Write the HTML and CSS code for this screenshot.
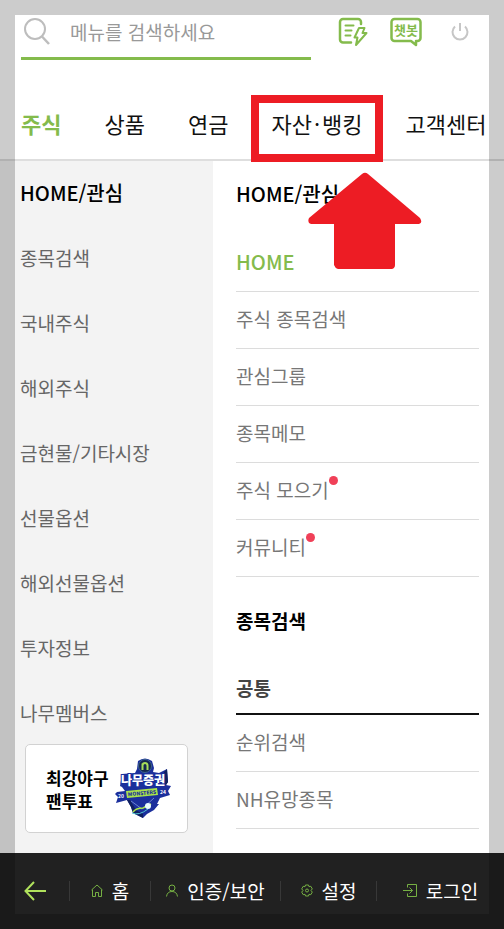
FILE: index.html
```html
<!DOCTYPE html>
<html lang="ko">
<head>
    <meta charset="UTF-8">
    <meta name="viewport" content="width=device-width, initial-scale=1.0">
    <title>전체 메뉴</title>
    <link rel="stylesheet" href="styles.css">
</head>
<body>

<div class="page">
    <header class="header">
        <div class="top">
            <label class="search">
                <svg width="26" height="28" viewBox="0 0 26 28" fill="none" stroke="#bdbdbd" stroke-width="2" role="img" aria-label="검색">
                    <circle cx="11" cy="11" r="10"/>
                    <path d="M18 18.500l7 7.500" stroke-width="2.500"/>
                </svg>
                <input type="search" placeholder="메뉴를 검색하세요">
            </label>
            <div class="tools">
                <button type="button" aria-label="빠른주문">
                    <svg width="30" height="30" viewBox="0 0 30 30" fill="none" stroke="#84bb4c" stroke-width="2.500" stroke-linejoin="round" stroke-linecap="round">
                        <path d="M23 7V5A3 3 0 0 0 20 2H5A3 3 0 0 0 2 5V22.500A3 3 0 0 0 5 25.500H13"/>
                        <path d="M7.500 8.500h8M7.500 13.500h6M7.500 18.500h5" stroke-width="2"/>
                        <path d="M21 11h5.500l-2 5h4L18 28l1.500-7.500h-3z" stroke-width="2"/>
                    </svg>
                </button>
                <button type="button" class="chatbot">
                    <svg width="32" height="30" viewBox="0 0 32 30" fill="none" stroke="#84bb4c" stroke-width="2.500" stroke-linejoin="round">
                        <path d="M4.500 2h23A3 3 0 0 1 30.500 5v16a3 3 0 0 1-3 3H26v4l-5-4H4.500a3 3 0 0 1-3-3V5a3 3 0 0 1 3-3z"/>
                    </svg>
                    <span>챗봇</span>
                </button>
                <button type="button" class="power" aria-label="종료">
                    <svg width="18" height="20" viewBox="0 0 18 20" fill="none" stroke="#c6c6c6" stroke-width="2">
                        <path d="M4 4.500a7.500 7.500 0 1 0 10 0M9 1v8"/>
                    </svg>
                </button>
            </div>
        </div>
        <nav class="tabs">
            <a href="#" class="active">주식</a>
            <a href="#">상품</a>
            <a href="#">연금</a>
            <a href="#" class="marked">자산<span class="dot">·</span>뱅킹
                <svg class="arrow" width="114" height="97" viewBox="0 0 114 97" fill="#ed1c24">
                    <path d="M54 2q3-2.500 6 0L112 46q3 5-1 6H87v41q0 3-3 4H30q-3-1-4-4V52H3q-4-1-2-6z"/>
                </svg>
            </a>
            <a href="#">고객센터</a>
        </nav>
    </header>

    <main class="content">
        <aside class="side">
            <nav class="categories">
                <a href="#" class="active">HOME/관심</a>
                <a href="#">종목검색</a>
                <a href="#">국내주식</a>
                <a href="#">해외주식</a>
                <a href="#">금현물/기타시장</a>
                <a href="#">선물옵션</a>
                <a href="#">해외선물옵션</a>
                <a href="#">투자정보</a>
                <a href="#">나무멤버스</a>
            </nav>
            <a href="#" class="banner">
                <span>최강야구<br>팬투표</span>
                <svg width="56" height="62" viewBox="0 0 56 62" role="img" aria-label="나무증권 몬스터즈">
                    <path fill="#1b2f9c" d="M23 3Q30-2 37 3L39 10 38 14 44 15 52 11 53 24 51 27 56 28 53 33 55 37 45 40 42 46 44 46 39 52 32 56 28 60 18 55 16 49 12 42 1 45 3 39 0 36 2 34 10 33 7 29 5 28 7 16 20 15 22 11Z"/>
                    <path fill="#10205f" d="M52 11L53 24 51 27 49 28V14ZM12 42L16 49 18 55 28 60 28 56 21 52 15 42Z"/>
                    <circle cx="30" cy="8" r="6.500" fill="#14284f" stroke="#3d6490"/>
                    <path d="M27.500 12V5.500M27.500 7.500q0-2.500 2.500-2.500t2.500 2.500v4.500" fill="none" stroke="#a6df5a" stroke-width="2"/>
                    <text x="28" y="27" class="logo-name">나무증권</text>
                    <path fill="#a9e34b" d="M11 33L42 30 43 37 12 40Z"/>
                    <text x="27" y="37" class="logo-team" transform="rotate(-5 27 35)">MONSTERS</text>
                    <text x="6" y="40" class="logo-year">20</text>
                    <text x="48" y="36" class="logo-year">24</text>
                    <path d="M16 43L27 51 39 40" fill="none" stroke="#6d83cf" stroke-width="1"/>
                    <path d="M18 54q3-4 10-4l8-4" fill="none" stroke="#a9e34b" stroke-width="1.500"/>
                    <path d="M17 55q7 3 16-4" fill="none" stroke="#54c7d6" stroke-width="1"/>
                    <circle cx="33" cy="48" r="3" fill="#e9fbff"/>
                </svg>
            </a>
        </aside>

        <section class="menu">
            <h2 class="first">HOME/관심</h2>
            <ul>
                <li><a href="#" class="active">HOME</a></li>
                <li><a href="#">주식 종목검색</a></li>
                <li><a href="#">관심그룹</a></li>
                <li><a href="#">종목메모</a></li>
                <li><a href="#" class="new">주식 모으기</a></li>
                <li><a href="#" class="new">커뮤니티</a></li>
            </ul>
            <h2>종목검색</h2>
            <h3>공통</h3>
            <ul>
                <li><a href="#">순위검색</a></li>
                <li><a href="#">NH유망종목</a></li>
            </ul>
        </section>
    </main>

    <footer class="bottom">
        <button type="button" aria-label="뒤로">
            <svg width="22" height="20" viewBox="0 0 22 20" fill="none" stroke="#b0e25c" stroke-width="2">
                <path d="M22 10H1.500M10 1L1.500 10 10 19"/>
            </svg>
        </button>
        <a href="#">
            <svg width="12" height="13" viewBox="0 0 12 13" fill="none" stroke="#76b043" stroke-linejoin="round">
                <path d="M.5 6L6 1l5.500 5M1.500 5.500v7h3v-4h3v4h3v-7"/>
            </svg>
            홈
        </a>
        <a href="#">
            <svg width="12" height="13" viewBox="0 0 12 13" fill="none" stroke="#76b043">
                <circle cx="6" cy="4" r="3"/>
                <path d="M.5 12.500C1 9 3 7.500 6 7.500s5 1.500 5.500 5"/>
            </svg>
            인증/보안
        </a>
        <a href="#">
            <svg width="12" height="13" viewBox="0 0 12 13" fill="none" stroke="#76b043" stroke-linejoin="round">
                <path d="M4.500 1h3l.5 1.700 1.800-.4 1.500 2.600L10 6.500l1.300 1.600-1.500 2.600-1.800-.4-.5 1.700h-3L4 10.300l-1.800.4L.7 8.100 2 6.500.7 4.900l1.500-2.600 1.800.4z"/>
                <circle cx="6" cy="6.500" r="1.500"/>
            </svg>
            설정
        </a>
        <a href="#">
            <svg width="14" height="13" viewBox="0 0 14 13" fill="none" stroke="#76b043">
                <path d="M4.500 3.500v-3h9v12h-9v-3M0 6.500h9.500M6.500 3.500l3 3-3 3"/>
            </svg>
            로그인
        </a>
    </footer>
</div>

</body>
</html>
```
FILE: styles.css
```css
* {
    box-sizing: border-box;
}
body {
    margin: 0;
    font-family: "Noto Sans CJK KR", sans-serif;
    font-size: 19px;
    line-height: 28px;
    color: #777;
    background-color: #fff;
}
a {
    color: inherit;
    text-decoration: none;
    white-space: nowrap;
}
button {
    padding: 0;
    border: none;
    background: none;
    cursor: pointer;
}
svg {
    display: block;
    flex-shrink: 0;
}
.page {
    position: relative;
    display: flex;
    flex-direction: column;
    min-height: 100vh;
    overflow: hidden;
}
/* shaded frame over the whole page */
.page::after {
    content: "";
    position: absolute;
    inset: 0;
    border: 15px solid rgba(0, 0, 0, 0.2);
    pointer-events: none;
}

/* header */
.header {
    padding-top: 15px;
    border-bottom: 2px solid #dedede;
}
.top {
    display: flex;
    justify-content: space-between;
    padding: 0 35px 0 21px;
}
.search {
    display: flex;
    align-items: center;
    gap: 20px;
    width: 290px;
    height: 45px;
    padding: 0 3px 8px;
    border-bottom: 3px solid #84bb4c;
}
.search input {
    flex: 1;
    min-width: 0;
    padding: 0;
    border: none;
    outline: none;
    background: none;
    font: inherit;
}
.search input::placeholder {
    color: #999;
    opacity: 1;
}
.tools {
    display: flex;
    align-items: center;
    gap: 22px;
    height: 34px;
}
.chatbot {
    position: relative;
}
.chatbot span {
    position: absolute;
    inset: 0;
    font: bold 13px/26px "Noto Sans CJK KR", sans-serif;
    color: #84bb4c;
}
.power {
    margin-left: 7px;
}
.tabs {
    display: flex;
    gap: 43px;
    padding: 48px 0 21px 21px;
    font-size: 22px;
    line-height: 30px;
    color: #111;
}
.tabs .active {
    font-weight: bold;
    color: #84bb4c;
}
.marked {
    position: relative;
}
.marked::after {
    content: "";
    position: absolute;
    inset: -13px -20px -24px;
    border: 8px solid #ed1c24;
}
.dot {
    margin: 0 2px;
}
.arrow {
    position: absolute;
    top: 64px;
    left: 37px;
    z-index: 1;
}

/* content */
.content {
    flex: 1;
    display: grid;
    grid-template-columns: 213px 1fr;
}
.side {
    padding: 18px 25px 20px;
    background-color: #f3f3f3;
}
.categories {
    display: flex;
    flex-direction: column;
    gap: 37px;
    margin-left: -5px;
    color: #666;
}
.categories .active {
    font-size: 20px;
    font-weight: 500;
    color: #000;
}
.banner {
    display: flex;
    align-items: center;
    justify-content: space-between;
    height: 89px;
    margin-top: 17px;
    padding: 0 16px 0 20px;
    border: 1px solid #d2d2d2;
    border-radius: 5px;
    background-color: #fff;
    font-size: 17px;
    font-weight: bold;
    line-height: 23px;
    color: #000;
}
.logo-name {
    font-size: 12px;
    font-weight: 900;
    text-anchor: middle;
    fill: #fff;
    stroke: #1b2f9c;
    stroke-width: 2px;
    paint-order: stroke;
}
.logo-team {
    font-size: 5px;
    font-weight: 900;
    text-anchor: middle;
    fill: #1b2f9c;
}
.logo-year {
    font-size: 5px;
    font-weight: bold;
    text-anchor: middle;
    fill: #fff;
}
.menu {
    padding: 19px 25px 24px 23px;
}
.menu h2,
.menu h3 {
    margin: 0;
    font-size: 19px;
    font-weight: bold;
    color: #000;
}
.menu .first {
    font-size: 20px;
    font-weight: 500;
}
.menu h3 {
    margin-top: 39px;
    padding-bottom: 11px;
    border-bottom: 2px solid #111;
    color: #444;
}
.menu ul {
    margin: 0;
    padding: 0;
    list-style: none;
}
.menu h2 + ul {
    margin: 27px 0 30px;
}
.menu li {
    display: flex;
    align-items: center;
    height: 57px;
    padding-bottom: 2px;
    border-bottom: 1px solid #dcdcdc;
}
.menu .active {
    font-size: 20px;
    font-weight: 500;
    color: #84bb4c;
}
.new {
    position: relative;
}
.new::after {
    content: "";
    position: absolute;
    top: 0;
    right: -9px;
    width: 9px;
    height: 9px;
    border-radius: 50%;
    background-color: #f04058;
}

/* bottom bar */
.bottom {
    display: grid;
    grid-template-columns: 69fr 81fr 130fr 96fr 128fr;
    align-items: center;
    height: 76px;
    padding-bottom: 1px;
    background-color: #212121;
    color: #fff;
}
.bottom a,
.bottom button {
    display: flex;
    align-items: center;
    justify-content: center;
    gap: 9px;
    height: 20px;
}
.bottom a {
    border-left: 1px solid #383838;
}
```
